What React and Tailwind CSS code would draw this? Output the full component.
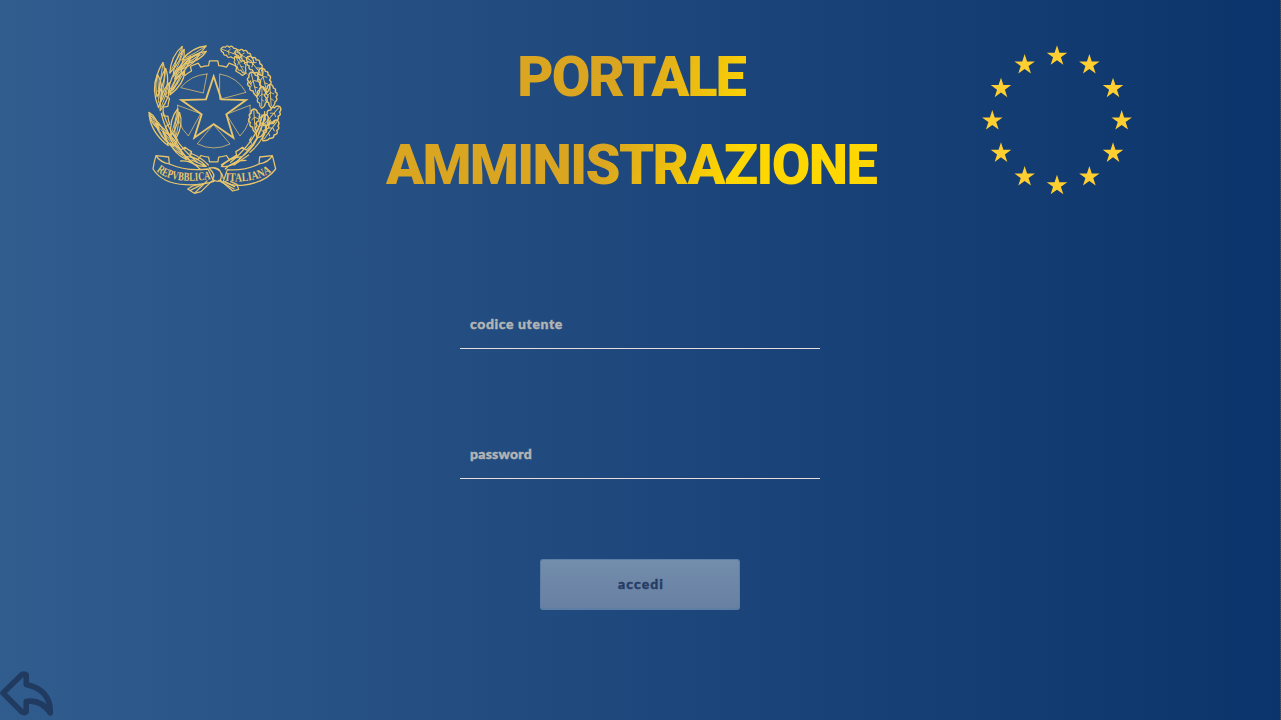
import React from "react";

const rad = (d) => (d * Math.PI) / 180;
const fmt = (n) => n.toFixed(2);

function starPoints(cx, cy, r, inner = 0.382) {
  return Array.from({ length: 10 }, (_, i) => {
    const q = i % 2 ? r * inner : r;
    const a = rad(-90 + i * 36);
    return fmt(cx + q * Math.cos(a)) + "," + fmt(cy + q * Math.sin(a));
  }).join(" ");
}

function gearPath(cx, cy, r1, r2, teeth) {
  const step = 360 / teeth;
  let d = "";
  const pt = (r, a) => fmt(cx + r * Math.cos(rad(a))) + " " + fmt(cy + r * Math.sin(rad(a)));
  for (let i = 0; i < teeth; i++) {
    const a = -90 - step * 0.28 + i * step;
    d += (i ? "L" : "M") + pt(r1, a);
    d += "L" + pt(r2, a + step * 0.07) + "L" + pt(r2, a + step * 0.49) + "L" + pt(r1, a + step * 0.56);
    d += "A" + r1 + " " + r1 + " 0 0 1 " + pt(r1, a + step);
  }
  return d + "Z";
}

const OLIVE = [
  [162, 54, 42, 150], [166, 68, 38, 150], [150, 80, 38, 140], [108, 74, 44, 115],
  [116, 84, 44, 112], [128, 98, 42, 125], [105, 132, 48, 115], [112, 144, 42, 122],
  [60, 134, 52, 100], [70, 150, 50, 98], [54, 168, 50, 88], [74, 185, 44, 108],
  [42, 258, 30, 60], [56, 286, 54, 58], [103, 262, 42, 104], [113, 272, 40, 98],
  [74, 300, 44, 52], [98, 325, 46, 50], [116, 350, 34, 45],
];

const OAK = [
  [272, 52, 1, 20], [312, 64, 1, 30], [300, 88, 0.9, 60], [344, 92, 1.1, 50],
  [342, 146, 1.15, 75], [372, 134, 1.15, 75], [366, 186, 1, 90], [392, 182, 1.1, 85],
  [396, 242, 1.15, 130], [344, 256, 1.1, 85], [366, 272, 1.15, 110], [392, 286, 1.15, 125],
];

function Emblem() {
  return (
    <svg viewBox="0 0 450 510" className="h-[170px] w-[150px]" fill="none" stroke="#e9c66b" strokeWidth="3.8" strokeLinejoin="round" strokeLinecap="round">
      <clipPath id="gear-area"><path d="M145 60H290L335 140V330L280 395H135L90 335L65 260V185L110 150Z" /></clipPath>
      <path d={gearPath(221, 229, 138, 152, 16)} clipPath="url(#gear-area)" />
      <g strokeWidth="2.2">
        <path d="M201 117L190 174L122 158A111 111 0 0 1 201 117Z" />
        <path d="M240 117A111 111 0 0 1 318 172L240 193Z" />
        <path d="M113 211L182 236L145 303A111 111 0 0 1 113 211Z" />
        <path d="M330 211L259 238L300 303A111 111 0 0 0 330 211Z" />
        <path d="M221 269L270 327Q221 351 173 327Z" />
      </g>
      <polygon points="221,124 244,193 318,195 259,238 280,308 221,267 163,308 185,238 124,195 198,193" strokeWidth="5.5" strokeLinejoin="miter" />
      <g>
        {OLIVE.map(([x, y, l, a], i) => (
          <g key={i} transform={`translate(${x} ${y}) rotate(${a})`}>
            <path d={`M${-l} 0Q${-l * 0.2} ${-l * 0.45} ${l} 0Q${-l * 0.1} ${l * 0.42} ${-l} 0Z`} />
            <path d={`M${-l} 0Q0 -3 ${l * 0.7} 0`} strokeWidth="2.5" />
          </g>
        ))}
      </g>
      <path d="M64 235Q82 318 160 385M70 232Q92 314 172 382" />
      <g>
        {OAK.map(([x, y, s, a], i) => (
          <g key={i} transform={`translate(${x} ${y}) rotate(${a}) scale(${s})`}>
            <path d="M-31 0Q-29-10-20-9Q-18-18-9-13Q-4-23 5-14Q13-20 18-10Q27-10 34 1Q26 9 18 7Q15 18 5 12Q-2 21-9 12Q-18 17-20 8Q-29 8-31 0Z" />
            <path d="M-27 0L27 1M-9 0L-4-9M-8 0L-2 8M8 1L13-6" strokeWidth="2.4" />
          </g>
        ))}
      </g>
      <path d="M374 230Q370 315 284 385M366 240Q356 310 272 382M384 258Q375 315 330 352M358 290Q350 330 310 362" />
      <path d="M136 365Q170 364 199 394Q164 398 136 365ZM122 378Q154 374 182 404M150 354Q183 366 205 390M155 375L192 391M306 365Q270 368 244 394Q278 400 306 365ZM318 376Q280 376 256 402M290 360L244 389M326 360L282 390" />
      <path d="M48 362Q42 381 39 402Q67 446 136 449Q185 451 222 439L204 402Q140 410 88 387Q60 382 48 362ZM48 362L86 366L88 387" />
      <path d="M397 362Q402 380 407 402Q376 444 306 451Q271 453 250 439L262 404Q312 408 357 387Q386 382 397 362ZM397 362L359 366L357 387" />
      <path d="M207 399Q232 394 240 408Q248 423 240 437Q226 443 217 431Q230 422 207 399M220 399Q246 404 250 430M201 438L163 475L143 462L158 453L178 448M217 437L183 470L163 475M243 437L278 468L296 463L291 448L272 440" />
      <path d="M236 436L282 462M192 445L151 466M255 440L284 455" />
      <path id="ribbon-left" d="M49 408Q98 450 216 432" stroke="none" />
      <path id="ribbon-right" d="M256 437Q345 447 399 408" stroke="none" />
      <g className="font-['Liberation_Serif',serif] text-[36px] font-bold" fill="#e9c66b" stroke="none">
        <text><textPath href="#ribbon-left" textLength="170" lengthAdjust="spacingAndGlyphs">REPVBBLICA</textPath></text>
        <text><textPath href="#ribbon-right" textLength="144" lengthAdjust="spacingAndGlyphs">ITALIANA</textPath></text>
      </g>
    </svg>
  );
}

function EuropeanStars() {
  return (
    <svg viewBox="0 0 150 150" className="h-[150px] w-[150px] overflow-visible" fill="#ffce31">
      {Array.from({ length: 12 }, (_, i) => {
        const a = rad(i * 30);
        return <polygon key={i} points={starPoints(75 + 64.7 * Math.cos(a), 76.8 + 64.7 * Math.sin(a), 10.8)} />;
      })}
    </svg>
  );
}

function Field({ type, label, spacing }) {
  return (
    <input
      type={type}
      placeholder={label}
      aria-label={label}
      className={`h-[50px] w-[360px] border-b border-[#e6dede] bg-transparent px-2.5 font-['Lato',sans-serif] text-[14px] font-black text-[#b4b4b4] outline-none [-webkit-text-stroke:0.4px_#b4b4b4] placeholder:text-[#b4b4b4] ${spacing}`}
    />
  );
}

export default function App() {
  return (
    <div className="flex h-[720px] w-full overflow-hidden bg-linear-to-r from-[#315c8e] to-[#0a346b]">
      <main className="flex w-[1280px] shrink-0 flex-col">
        <header className="flex h-[240px] shrink-0 items-start pt-8 pl-[140px]">
          <div className="pt-[3px]"><Emblem /></div>
          <h1 className="ml-[50px] flex w-[600px] flex-col items-center bg-[linear-gradient(109deg,#daa520_46%,#ffd700_67%)] bg-clip-text pt-px pr-[18px] font-['Roboto',sans-serif] text-[56px] leading-[88px] font-black text-transparent">
            <span className="tracking-[-2.1px]">PORTALE</span>
            <span className="tracking-[-1.65px]">AMMINISTRAZIONE</span>
          </h1>
          <div className="ml-[42px] pt-3"><EuropeanStars /></div>
        </header>
        <form className="flex flex-col items-center pt-[59px]" onSubmit={(e) => e.preventDefault()}>
          <Field type="text" label="codice utente" spacing="tracking-[0.6px]" />
          <div className="h-20" />
          <Field type="password" label="password" spacing="tracking-[0.25px]" />
          <button className="mt-20 h-[51px] w-[200px] rounded-[3px] border border-b-2 border-[#5e7ea6] bg-linear-to-b from-[#738dad] to-[#6880a1] pb-0.5 pl-0.5 font-['Lato',sans-serif] text-[14px] font-black tracking-[1.1px] text-[#263e66] [-webkit-text-stroke:0.4px_#263e66]">
            accedi
          </button>
        </form>
        <a href="#" aria-label="indietro" className="mt-auto block pb-[3px]">
          <svg viewBox="0 0 54 46" className="h-[46px] w-[54px]" fill="none" stroke="#203a60" strokeWidth="5.5" strokeLinejoin="round">
            <path d="M26.2 4Q24.5 2.2 22 3.5L3 22L22 41Q24.5 42.5 26.2 40.7V30.5Q41 28 50.3 42Q51 19 26.2 13.5Z" />
          </svg>
        </a>
      </main>
      <div className="w-px shrink-0 bg-[repeating-linear-gradient(to_bottom,#4d555e_0px,#4d555e_1px,#26405f_1px,#26405f_2px)]" />
    </div>
  );
}
